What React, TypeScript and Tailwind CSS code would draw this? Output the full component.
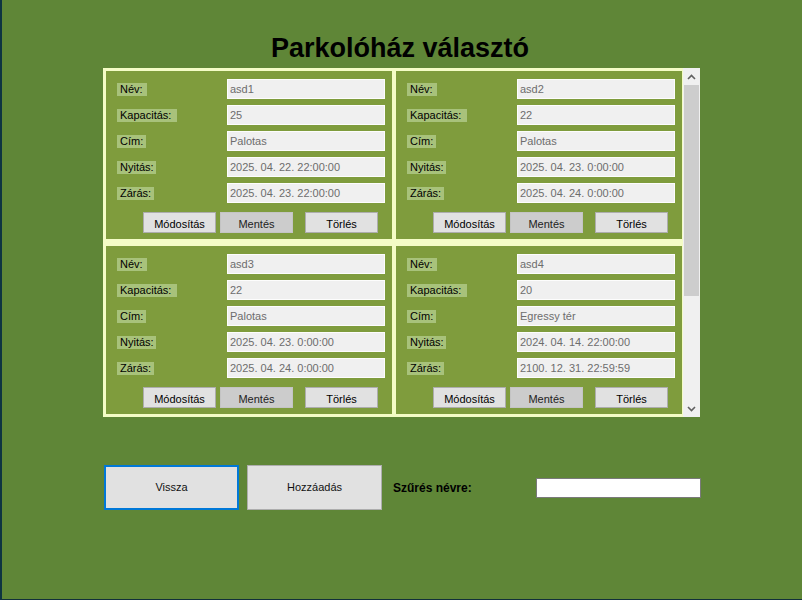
const font = { fontFamily: '"Liberation Sans", Arial, sans-serif' };

type Garage = {
  name: string;
  capacity: string;
  address: string;
  open: string;
  close: string;
};

const garages: Garage[] = [
  { name: 'asd1', capacity: '25', address: 'Palotas', open: '2025. 04. 22. 22:00:00', close: '2025. 04. 23. 22:00:00' },
  { name: 'asd2', capacity: '22', address: 'Palotas', open: '2025. 04. 23. 0:00:00', close: '2025. 04. 24. 0:00:00' },
  { name: 'asd3', capacity: '22', address: 'Palotas', open: '2025. 04. 23. 0:00:00', close: '2025. 04. 24. 0:00:00' },
  { name: 'asd4', capacity: '20', address: 'Egressy tér', open: '2024. 04. 14. 22:00:00', close: '2100. 12. 31. 22:59:59' },
];

const fields: { label: string; width: string; key: keyof Garage }[] = [
  { label: 'Név:', width: 'w-[30px]', key: 'name' },
  { label: 'Kapacitás:', width: 'w-[60px]', key: 'capacity' },
  { label: 'Cím:', width: 'w-[29px]', key: 'address' },
  { label: 'Nyitás:', width: 'w-[39px]', key: 'open' },
  { label: 'Zárás:', width: 'w-[37px]', key: 'close' },
];

function GarageCard({ garage }: { garage: Garage }) {
  return (
    <div className="w-[286px] h-[168px] shrink-0 bg-[#7f9c3d] pt-[8px]">
      <div className="flex flex-col gap-[6px]">
        {fields.map((f) => (
          <div key={f.key} className="flex items-center h-[20px] pl-[11px]">
            <div className="w-[110px] flex items-center">
              <span
                className={`${f.width} h-[13px] bg-[#a8c27b] pl-[3px] text-[11px] leading-[13px] text-black whitespace-nowrap`}
              >
                {f.label}
              </span>
            </div>
            <div className="w-[158px] h-[20px] bg-[#f0f0f0] border border-[#fdfdfd] pl-[2px] text-[11px] leading-[18px] text-[#6d6d6d] whitespace-nowrap overflow-hidden">
              {garage[f.key]}
            </div>
          </div>
        ))}
      </div>
      <div className="flex mt-[9px] pl-[37px] text-[11px] leading-[20px] text-black">
        <button className="w-[73px] h-[21px] pt-[1px] bg-[#e1e1e1] border border-[#adadad]">Módosítás</button>
        <button className="w-[73px] h-[21px] pt-[1px] ml-[4px] bg-[#cccccc] border border-[#c4c4c4] text-[#222]">Mentés</button>
        <button className="w-[73px] h-[21px] pt-[1px] ml-[12px] bg-[#e1e1e1] border border-[#adadad]">Törlés</button>
      </div>
    </div>
  );
}

function Chevron({ up }: { up?: boolean }) {
  return (
    <svg width="9" height="6" viewBox="0 0 9 6" className={up ? '' : 'rotate-180'}>
      <path d="M1 5 L4.5 1.5 L8 5" fill="none" stroke="#606060" strokeWidth="1.6" />
    </svg>
  );
}

function ScrollBar() {
  return (
    <div className="w-[17px] h-full bg-[#f0f0f0] flex flex-col">
      <div className="h-[17px] flex items-center justify-center">
        <Chevron up />
      </div>
      <div className="h-[211px] mx-[1px] bg-[#cdcdcd]" />
      <div className="flex-1" />
      <div className="h-[17px] flex items-center justify-center">
        <Chevron />
      </div>
    </div>
  );
}

export default function App() {
  return (
    <div
      className="w-[802px] h-[600px] bg-[#5f8637] border-l-2 border-b border-l-[#0e3441] border-b-[#12303a] flex flex-col overflow-hidden"
      style={font}
    >
      <h1 className="mt-[33px] pr-[4px] text-center text-[27px] leading-[31px] font-bold text-black">
        Parkolóház választó
      </h1>

      <div className="ml-[101px] mt-[4px] w-[597px] h-[349px] bg-[#f4fcc6] flex">
        <div className="w-[580px] h-full overflow-hidden pt-[3px] pl-[3px]">
          <div className="grid grid-cols-[286px_286px] gap-x-[4px] gap-y-[7px]">
            {garages.map((g) => (
              <GarageCard key={g.name} garage={g} />
            ))}
          </div>
        </div>
        <ScrollBar />
      </div>

      <div className="ml-[102px] mt-[48px] flex items-center text-[11px]">
        <button className="w-[135px] h-[45px] bg-[#e1e1e1] border-2 border-[#0078d7] text-[#111]">Vissza</button>
        <button className="w-[135px] h-[45px] ml-[8px] bg-[#e1e1e1] border border-[#adadad] text-[#111]">Hozzáadás</button>
        <span className="w-[143px] ml-[11px] text-[12px] font-bold text-black">Szűrés névre:</span>
        <input className="w-[165px] h-[20px] bg-white border border-[#7a7a7a] outline-none" />
      </div>
    </div>
  );
}
